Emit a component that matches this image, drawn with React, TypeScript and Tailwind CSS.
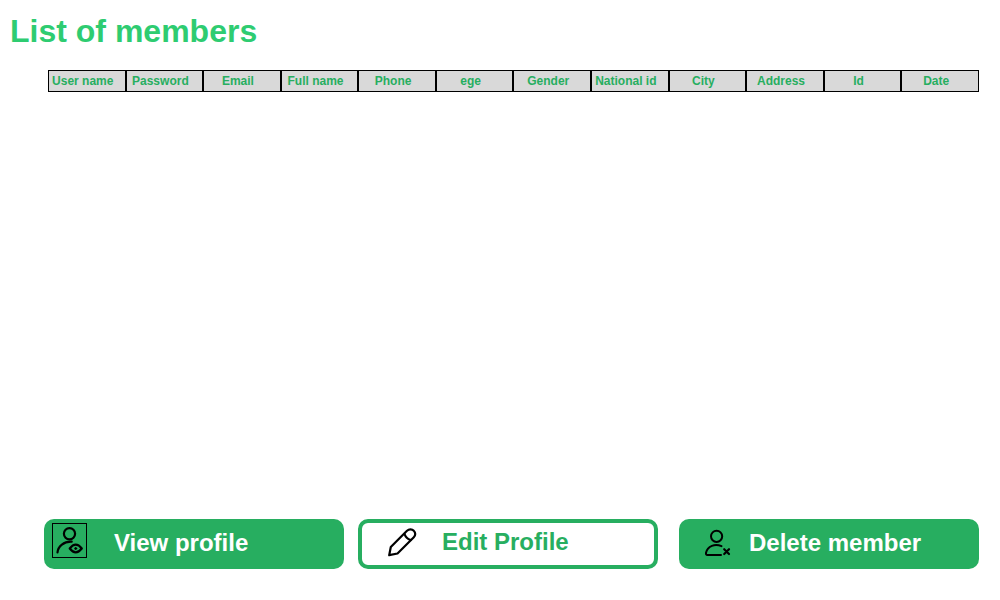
import type { ReactNode } from "react";

const columns = [
  "User name", "Password", "Email", "Full name", "Phone", "ege",
  "Gender", "National id", "City", "Address", "Id", "Date",
];

function ViewIcon() {
  return (
    <svg className="size-[35px] shrink-0 border border-black" viewBox="0 0 33 33" fill="none" stroke="black" strokeWidth="2.2" strokeLinecap="round" aria-hidden="true">
      <circle cx="16.5" cy="9.8" r="5.6" />
      <path d="M4.5 28.5C5 22 11 17.3 18.7 17.7" />
      <path d="M16.7 24.5Q22.7 16.8 28.8 24.5Q22.7 32.2 16.7 24.5Z" strokeLinejoin="round" />
      <circle cx="22.7" cy="24.5" r="1" fill="black" strokeWidth="1" />
    </svg>
  );
}

function PencilIcon() {
  return (
    <svg className="size-8 shrink-0" viewBox="0 0 32 32" fill="none" stroke="black" strokeWidth="2.2" strokeLinecap="round" strokeLinejoin="round" aria-hidden="true">
      <path d="M3.2 29.2L4.8 21L21 4.8C23 2.9 26 2.9 27.8 4.8C29.7 6.7 29.7 9.4 27.8 11.3L11.5 27.5Z" />
      <path d="M18.5 8Q20 12.5 24.7 14" />
    </svg>
  );
}

function DeleteIcon() {
  return (
    <svg className="size-7 shrink-0" viewBox="0 0 28 28" fill="none" stroke="black" strokeWidth="2" strokeLinecap="round" strokeLinejoin="round" aria-hidden="true">
      <circle cx="12.6" cy="7.3" r="5.6" />
      <path d="M17.5 17.2C11 14.3 3.5 17 2 23.8C1.8 25.2 2.2 26 3.5 26H17" />
      <path d="M20.2 20.2L25 25M25 20.2L20.2 25" strokeWidth="2.2" />
    </svg>
  );
}

function ActionButton({ className, children }: { className: string; children: ReactNode }) {
  return (
    <div className="min-w-0 flex-1">
      <button
        type="button"
        className={`flex h-[50px] w-full items-center rounded-[10px] text-2xl leading-none font-bold whitespace-nowrap ${className}`}
      >
        {children}
      </button>
    </div>
  );
}

export default function App() {
  return (
    <main className="flex min-h-screen flex-col bg-white pr-[21px] pb-[31px] font-['Arial_Rounded_MT_Bold','Liberation_Sans',sans-serif]">
      <h1 className="pt-[11px] pl-2.5 text-[32px] leading-10 font-bold text-[#2ecc71]">List of members</h1>
      <div className="mt-[19px] grow pl-12">
        <table className="w-full table-fixed border-separate border-spacing-0">
          <thead>
            <tr>
              {columns.map((name) => (
                <th
                  key={name}
                  scope="col"
                  className="h-[22px] border border-black bg-[#d9d9d9] p-0 pr-2 text-center text-[12px] leading-5 font-bold whitespace-nowrap text-[#27ae60]"
                >
                  {name}
                </th>
              ))}
            </tr>
          </thead>
        </table>
      </div>
      <div className="flex pl-11">
        <ActionButton className="gap-[27px] bg-[#27ae60] pb-[7px] pl-2 text-white">
          <ViewIcon />
          <span className="pt-1">View profile</span>
        </ActionButton>
        <div className="w-3.5" />
        <ActionButton className="gap-6 border-4 border-[#27ae60] bg-white pb-1 pl-6 text-[#27ae60]">
          <PencilIcon />
          <span>Edit Profile</span>
        </ActionButton>
        <div className="w-[21px]" />
        <ActionButton className="gap-[17px] bg-[#27ae60] pb-0.5 pl-[25px] text-white">
          <DeleteIcon />
          <span>Delete member</span>
        </ActionButton>
      </div>
    </main>
  );
}
